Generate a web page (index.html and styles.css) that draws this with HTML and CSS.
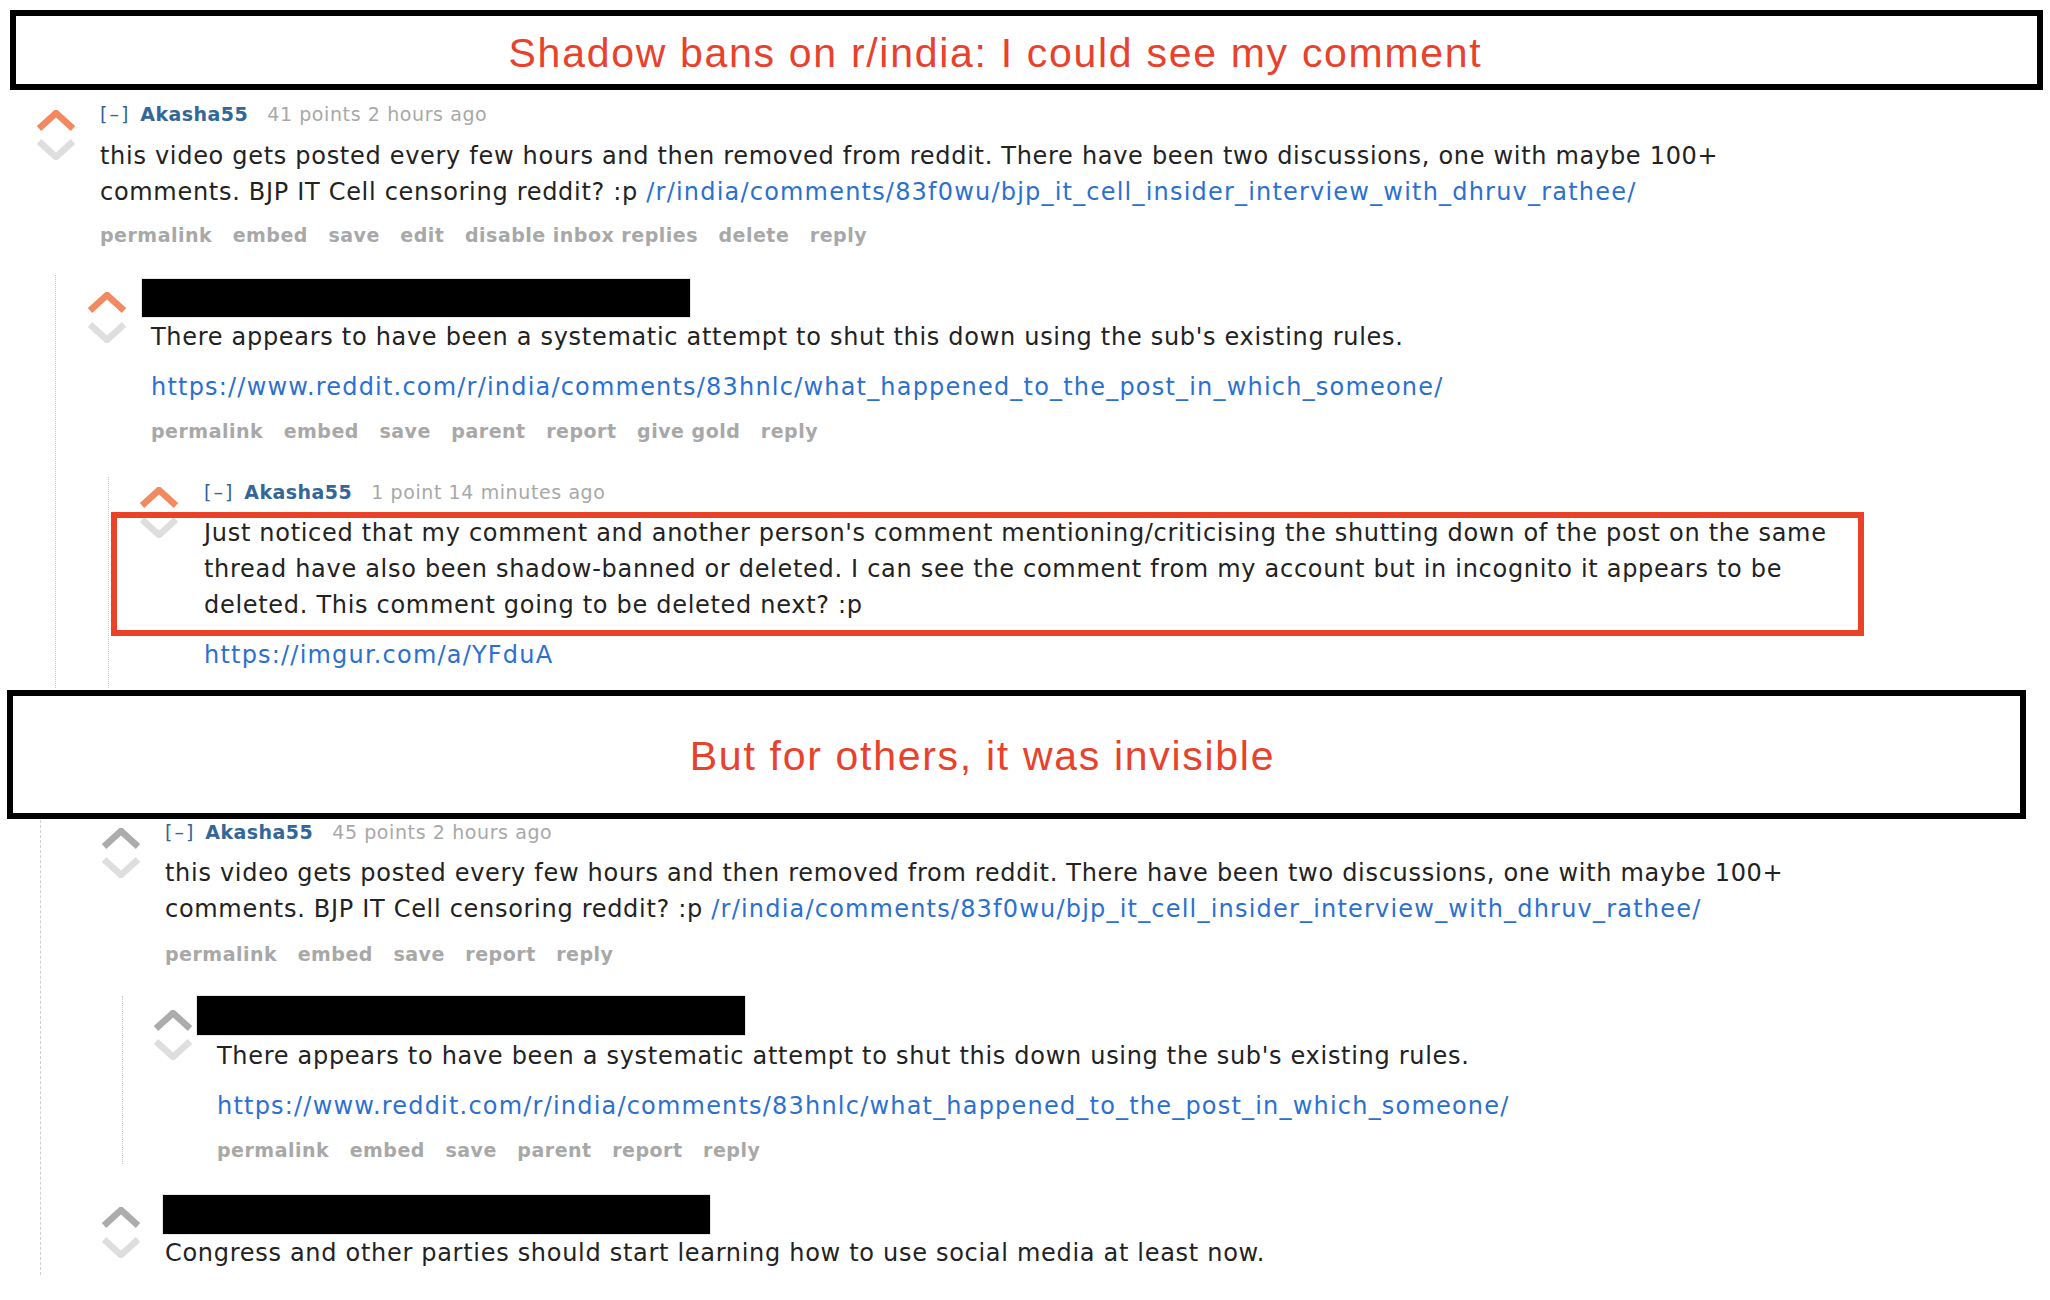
FILE: index.html
```html
<!DOCTYPE html>
<html lang="en">
<head>
<meta charset="utf-8">
<title>Shadow bans on r/india</title>
<link rel="stylesheet" href="styles.css">
</head>
<body>
<div class="page">

  <section class="view">
    <div class="banner banner-top"><h1 class="banner-title">Shadow bans on r/india: I could see my comment</h1></div>

    <div class="comment c1">
      <div class="vote">
        <svg class="arrow up up-on" viewBox="0 0 40 21"><polyline points="3,18.5 20,3 37,18.5"/></svg>
        <svg class="arrow down" viewBox="0 0 40 21"><polyline points="3,2.5 20,18 37,2.5"/></svg>
      </div>
      <div class="entry">
        <p class="tagline"><span class="expand">[–]</span><span class="author">Akasha55</span><span class="score">41 points 2 hours ago</span></p>
        <p class="md">this video gets posted every few hours and then removed from reddit. There have been two discussions, one with maybe 100+<br>comments. BJP IT Cell censoring reddit? :p <a class="link" href="#">/r/india/comments/83f0wu/bjp_it_cell_insider_interview_with_dhruv_rathee/</a></p>
        <ul class="buttons"><li>permalink</li><li>embed</li><li>save</li><li>edit</li><li>disable inbox replies</li><li>delete</li><li>reply</li></ul>
      </div>
    </div>

    <div class="child child-a1">
      <div class="comment c2">
        <div class="vote">
          <svg class="arrow up up-on" viewBox="0 0 40 21"><polyline points="3,18.5 20,3 37,18.5"/></svg>
          <svg class="arrow down" viewBox="0 0 40 21"><polyline points="3,2.5 20,18 37,2.5"/></svg>
        </div>
        <div class="entry">
          <div class="redact redact-c2"></div>
          <p class="md md-c2">There appears to have been a systematic attempt to shut this down using the sub's existing rules.</p>
          <p class="md md-link"><a class="link" href="#">https://www.reddit.com/r/india/comments/83hnlc/what_happened_to_the_post_in_which_someone/</a></p>
          <ul class="buttons buttons-c2"><li>permalink</li><li>embed</li><li>save</li><li>parent</li><li>report</li><li>give gold</li><li>reply</li></ul>
        </div>
      </div>

      <div class="child child-a2">
        <div class="comment c3">
          <div class="vote">
            <svg class="arrow up up-on" viewBox="0 0 40 21"><polyline points="3,18.5 20,3 37,18.5"/></svg>
            <svg class="arrow down" viewBox="0 0 40 21"><polyline points="3,2.5 20,18 37,2.5"/></svg>
          </div>
          <div class="entry">
            <p class="tagline"><span class="expand">[–]</span><span class="author">Akasha55</span><span class="score">1 point 14 minutes ago</span></p>
            <p class="md md-c3">Just noticed that my comment and another person's comment mentioning/criticising the shutting down of the post on the same<br>thread have also been shadow-banned or deleted. I can see the comment from my account but in incognito it appears to be<br>deleted. This comment going to be deleted next? :p</p>
            <p class="md md-link"><a class="link" href="#">https://imgur.com/a/YFduA</a></p>
          </div>
          <div class="highlight"></div>
        </div>
      </div>
    </div>
  </section>

  <section class="view">
    <div class="banner banner-bottom"><h1 class="banner-title">But for others, it was invisible</h1></div>

    <div class="thread-b">
      <div class="comment c1b">
        <div class="vote">
          <svg class="arrow up" viewBox="0 0 40 21"><polyline points="3,18.5 20,3 37,18.5"/></svg>
          <svg class="arrow down" viewBox="0 0 40 21"><polyline points="3,2.5 20,18 37,2.5"/></svg>
        </div>
        <div class="entry">
          <p class="tagline"><span class="expand">[–]</span><span class="author">Akasha55</span><span class="score">45 points 2 hours ago</span></p>
          <p class="md">this video gets posted every few hours and then removed from reddit. There have been two discussions, one with maybe 100+<br>comments. BJP IT Cell censoring reddit? :p <a class="link" href="#">/r/india/comments/83f0wu/bjp_it_cell_insider_interview_with_dhruv_rathee/</a></p>
          <ul class="buttons buttons-c1b"><li>permalink</li><li>embed</li><li>save</li><li>report</li><li>reply</li></ul>
        </div>
      </div>

      <div class="child child-b1">
        <div class="comment c2b">
          <div class="vote">
            <svg class="arrow up" viewBox="0 0 40 21"><polyline points="3,18.5 20,3 37,18.5"/></svg>
            <svg class="arrow down" viewBox="0 0 40 21"><polyline points="3,2.5 20,18 37,2.5"/></svg>
          </div>
          <div class="entry">
            <div class="redact redact-c2b"></div>
            <p class="md md-c2">There appears to have been a systematic attempt to shut this down using the sub's existing rules.</p>
            <p class="md md-link"><a class="link" href="#">https://www.reddit.com/r/india/comments/83hnlc/what_happened_to_the_post_in_which_someone/</a></p>
            <ul class="buttons buttons-c2"><li>permalink</li><li>embed</li><li>save</li><li>parent</li><li>report</li><li>reply</li></ul>
          </div>
        </div>
      </div>

      <div class="comment c3b">
        <div class="vote">
          <svg class="arrow up" viewBox="0 0 40 21"><polyline points="3,18.5 20,3 37,18.5"/></svg>
          <svg class="arrow down" viewBox="0 0 40 21"><polyline points="3,2.5 20,18 37,2.5"/></svg>
        </div>
        <div class="entry">
          <div class="redact redact-c3b"></div>
          <p class="md md-c3b">Congress and other parties should start learning how to use social media at least now.</p>
        </div>
      </div>
    </div>
  </section>

</div>
</body>
</html>
```

FILE: styles.css
```css
* { box-sizing: border-box; }

html, body {
  margin: 0;
  padding: 0;
  background: #ffffff;
}

body {
  font-family: "DejaVu Sans", Verdana, sans-serif;
  color: #222222;
}

.page {
  width: 2050px;
}

p, ul { margin: 0; padding: 0; }

/* ---------- banners ---------- */
.banner {
  border: 6px solid #000000;
  display: flex;
  align-items: center;
  justify-content: center;
}

.banner-top {
  margin: 10px 0 0 10px;
  width: 2033px;
  height: 80px;
  padding: 6px 62px 0 0;
}

.banner-bottom {
  margin: 2px 0 0 7px;
  width: 2019px;
  height: 129px;
  padding: 3px 68px 0 0;
}

.banner-title {
  margin: 0;
  font-family: "Liberation Sans", Arial, sans-serif;
  font-weight: normal;
  font-size: 41px;
  line-height: 46px;
  letter-spacing: 1.7px;
  color: #e8412c;
  white-space: nowrap;
}

/* ---------- comments ---------- */
.comment {
  display: flex;
  align-items: flex-start;
  position: relative;
}

.vote {
  width: 40px;
  flex: none;
  display: flex;
  flex-direction: column;
  gap: 8px;
}

.arrow {
  width: 40px;
  height: 21px;
  display: block;
  fill: none;
  stroke-width: 6.5;
  stroke-linecap: butt;
  stroke-linejoin: miter;
  filter: blur(0.5px);
}

.arrow.up { stroke: #acacac; }
.arrow.up-on { stroke: #f18a60; }
.arrow.down { stroke: #dedede; }

.entry {
  flex: none;
  margin-left: 24px;
}

.tagline {
  font-size: 19px;
  line-height: 24px;
  letter-spacing: 0.45px;
  white-space: nowrap;
  display: flex;
}

.expand { color: #336699; margin-right: 10px; letter-spacing: 2px; }
.author { color: #336699; font-weight: bold; margin-right: 19px; }
.score { color: #a8a8a8; letter-spacing: 0.6px; }

.md {
  font-size: 24px;
  line-height: 36px;
  letter-spacing: 0.7px;
  white-space: nowrap;
  color: #222222;
}

.link {
  color: #2b70d0;
  text-decoration: none;
  letter-spacing: 1.2px;
}

.buttons {
  list-style: none;
  display: flex;
  gap: 20.5px;
  font-size: 19px;
  line-height: 24px;
  letter-spacing: 0.5px;
  font-weight: bold;
  color: #a8a8a8;
  white-space: nowrap;
}

.redact {
  background: #000000;
  width: 548px;
  box-shadow: 0 0 0 1px #e4e4e4;
}

/* ---------- child containers ---------- */
.child {
  border-left: 1px dotted #c8c8c8;
}

/* ---------- view 1 ---------- */
.c1 { margin-top: 12px; }
.c1 .vote { margin-left: 36px; padding-top: 8px; }
.c1 .md { margin-top: 12px; }
.c1 .buttons { margin-top: 13px; }

.child-a1 {
  margin: 28px 0 0 55px;
  padding-top: 4px;
}

.c2 .vote { margin-left: 31px; padding-top: 13px; gap: 9px; }
.redact-c2 { height: 38px; margin-left: -9px; }
.md-c2 { margin-top: 2px; }
.md-link { margin-top: 14px; }
.buttons-c2 { margin-top: 14px; }

.child-a2 {
  margin: 34px 0 0 52px;
  padding: 3px 0 15px 0;
}

.c3 .vote { margin-left: 30px; padding-top: 7px; gap: 9px; }
.c3 .entry { margin-left: 25px; }
.md-c3 { margin-top: 11px; }

.highlight {
  position: absolute;
  left: 2px;
  top: 32px;
  width: 1753px;
  height: 124px;
  border: 6px solid #ea4127;
  pointer-events: none;
}

/* ---------- view 2 ---------- */
.thread-b {
  margin: 1px 0 0 40px;
  border-left: 1px dashed #cfcfcf;
  padding-bottom: 4px;
}

.c1b .vote { margin-left: 60px; padding-top: 8px; }
.c1b .md { margin-top: 11px; }
.buttons-c1b { margin-top: 15px; }

.child-b1 {
  margin: 30px 0 0 81px;
  padding-bottom: 2px;
}

.c2b .vote { margin-left: 30px; padding-top: 14px; }
.redact-c2b { height: 39px; margin-left: -20px; }
.c2b .md-c2 { margin-top: 3px; }

.c3b { margin-top: 31px; }
.c3b .vote { margin-left: 60px; padding-top: 12px; gap: 9px; }
.redact-c3b { height: 39px; margin-left: -2px; width: 547px; }
.md-c3b { margin-top: 1px; }
```
